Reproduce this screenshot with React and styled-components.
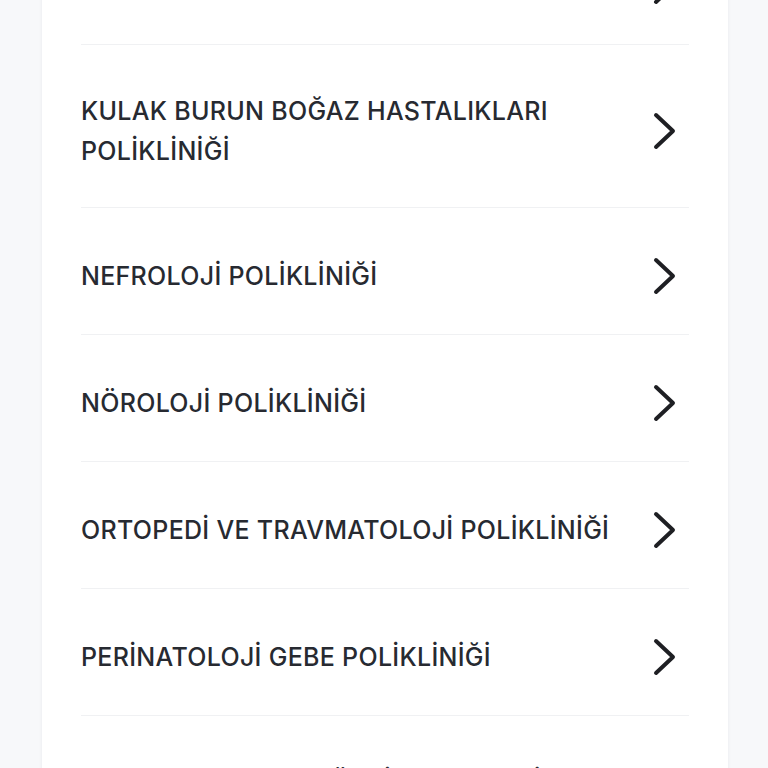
import React from 'react';
import styled, { createGlobalStyle } from 'styled-components';

const items = [
  'KARDİYOLOJİ POLİKLİNİĞİ',
  'KULAK BURUN BOĞAZ HASTALIKLARI POLİKLİNİĞİ',
  'NEFROLOJİ POLİKLİNİĞİ',
  'NÖROLOJİ POLİKLİNİĞİ',
  'ORTOPEDİ VE TRAVMATOLOJİ POLİKLİNİĞİ',
  'PERİNATOLOJİ GEBE POLİKLİNİĞİ',
  'PLASTIK REKONSTRÜKTİF VE ESTETİK CERRAHİ POLİKLİNİĞİ',
];

const GlobalStyle = createGlobalStyle`
  html, body {
    margin: 0;
    padding: 0;
    background: #f7f8fa;
    overflow: hidden;
  }
  * {
    box-sizing: border-box;
  }
`;

const Chevron = () => (
  <ChevronIcon viewBox="0 0 26 40" width="26" height="40">
    <polyline
      points="4,4 21,20 4,36"
      fill="none"
      stroke="currentColor"
      strokeWidth="4"
      strokeLinecap="round"
      strokeLinejoin="round"
    />
  </ChevronIcon>
);

const App = () => {
  return (
    <Page>
      <GlobalStyle />
      <Card>
        <List>
          {items.map((name) => (
            <Row key={name}>
              <Label>{name}</Label>
              <Chevron />
            </Row>
          ))}
        </List>
      </Card>
    </Page>
  );
};

const Page = styled.div`
  height: 768px;
  overflow: hidden;
  padding: 0 40px 0 42px;
`;

const Card = styled.div`
  margin-top: -82px;
  background: #fff;
  box-shadow: 0 0 4px rgba(30, 40, 60, 0.06);
  padding: 0 39px;
`;

const List = styled.ul`
  list-style: none;
  margin: 0;
  padding: 0;
`;

const Row = styled.li`
  display: flex;
  align-items: center;
  justify-content: space-between;
  gap: 20px;
  min-height: 127px;
  padding: 46px 0 36px;
  border-bottom: 1px solid #f0f1f3;
`;

const Label = styled.span`
  display: flex;
  align-items: center;
  min-height: 44px;
  font-family: 'Inter', 'Noto Sans', sans-serif;
  font-size: 25px;
  font-weight: 500;
  line-height: 40px;
  color: #272a31;
  letter-spacing: 0.3px;
`;

const ChevronIcon = styled.svg`
  flex: none;
  margin-right: 11px;
  color: #1e1f23;
`;

export default App;
